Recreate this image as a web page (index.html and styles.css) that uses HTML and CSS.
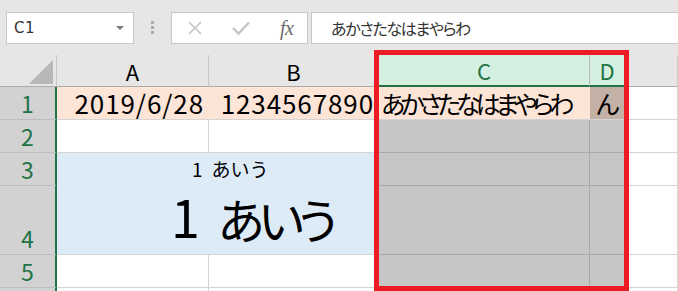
FILE: index.html
```html
<!DOCTYPE html>
<html lang="ja">
<head>
<meta charset="utf-8">
<link rel="stylesheet" href="styles.css">
</head>
<body>
<div class="app">
  <div class="toolbar">
    <div class="namebox"><span class="nb-text">C1</span><span class="nb-arrow"></span></div>
    <div class="grip"><i></i><i></i><i></i></div>
    <div class="fxbuttons">
      <svg class="ic-x" width="16" height="16" viewBox="0 0 16 16"><path d="M2 2 L14 14 M14 2 L2 14" stroke="#c4c4c4" stroke-width="1.6" fill="none"/></svg>
      <svg class="ic-check" width="20" height="16" viewBox="0 0 20 16"><path d="M2 8 L7.5 13.5 L18 2.5" stroke="#c4c4c4" stroke-width="2.4" fill="none"/></svg>
      <span class="ic-fx">fx</span>
    </div>
    <div class="formula"><span class="formula-text">あかさたなはまやらわ</span></div>
  </div>
  <div class="sheet">
    <div class="corner"><svg width="26" height="26" viewBox="0 0 26 26"><polygon points="1,25 25,25 25,1" fill="#b7b7b7"/></svg></div>
    <div class="colh">A</div>
    <div class="colh">B</div>
    <div class="colh sel">C</div>
    <div class="colh sel last">D</div>
    <div class="colh"></div>

    <div class="rowh">1</div>
    <div class="cell peach right num">2019/6/28</div>
    <div class="cell peach right num">1234567890</div>
    <div class="cell peach kana">あかさたなはまやらわ</div>
    <div class="cell peachsel kana">ん</div>
    <div class="cell"></div>

    <div class="rowh">2</div>
    <div class="cell"></div>
    <div class="cell"></div>
    <div class="cell gray"></div>
    <div class="cell gray"></div>
    <div class="cell"></div>

    <div class="rowh">3</div>
    <div class="merged">
      <div class="m-small"><span>1</span><span class="m-small-kana">あいう</span></div>
      <div class="m-big"><span>1</span><span class="m-big-kana">あいう</span></div>
    </div>
    <div class="cell gray"></div>
    <div class="cell gray"></div>
    <div class="cell"></div>

    <div class="rowh">4</div>
    <div class="cell gray"></div>
    <div class="cell gray"></div>
    <div class="cell"></div>

    <div class="rowh">5</div>
    <div class="cell"></div>
    <div class="cell"></div>
    <div class="cell gray"></div>
    <div class="cell gray"></div>
    <div class="cell"></div>

    <div class="rowh"></div>
    <div class="cell"></div>
    <div class="cell"></div>
    <div class="cell gray"></div>
    <div class="cell gray"></div>
    <div class="cell"></div>

    <div class="redbox"></div>
  </div>
</div>
</body>
</html>
```
FILE: styles.css
```css
html, body {
  margin: 0;
  padding: 0;
}
body {
  width: 678px;
  height: 291px;
  overflow: hidden;
  background: #e6e6e6;
  font-family: "Noto Sans CJK JP", "Noto Sans", sans-serif;
}
.app {
  width: 678px;
  height: 291px;
  overflow: hidden;
}
.toolbar {
  display: flex;
  align-items: flex-start;
  height: 55px;
  padding: 12px 0 0 6px;
  box-sizing: border-box;
}
.namebox {
  width: 128px;
  height: 32px;
  box-sizing: border-box;
  background: #fff;
  border: 1px solid #c6c6c6;
  display: flex;
  align-items: center;
  justify-content: space-between;
  padding: 0 9px 0 7px;
}
.nb-text {
  font-family: "DejaVu Sans", sans-serif;
  font-size: 15px;
  color: #333;
  letter-spacing: 0.5px;
}
.nb-arrow {
  width: 0;
  height: 0;
  border-left: 4px solid transparent;
  border-right: 4px solid transparent;
  border-top: 4px solid #7b7b7b;
}
.grip {
  margin-left: 17px;
  margin-top: 9px;
  display: flex;
  flex-direction: column;
  gap: 2px;
}
.grip i {
  display: block;
  width: 3px;
  height: 3px;
  background: #adadad;
}
.fxbuttons {
  margin-left: 17px;
  width: 137px;
  height: 32px;
  box-sizing: border-box;
  background: #fff;
  border: 1px solid #c6c6c6;
  display: flex;
  align-items: center;
  padding-left: 15px;
}
.ic-check {
  margin-left: 28px;
}
.ic-fx {
  margin-left: 29px;
  font-family: "Liberation Serif", serif;
  font-style: italic;
  font-size: 20px;
  color: #6a6a6a;
  letter-spacing: -0.5px;
}
.formula {
  margin-left: 3px;
  flex: 1;
  height: 32px;
  box-sizing: border-box;
  background: #fff;
  border: 1px solid #c6c6c6;
  border-right: none;
  display: flex;
  align-items: center;
  padding-left: 19px;
}
.formula-text {
  font-size: 16px;
  color: #333;
  font-feature-settings: "palt";
  letter-spacing: -1.3px;
}
.sheet {
  position: relative;
  display: grid;
  grid-template-columns: 57px 152px 170px 211px 35px 1fr;
  grid-template-rows: 32px 33px 33px 33px 69px 33px 33px;
}
.corner {
  background: #e6e6e6;
  border-right: 1px solid #c9c9c9;
  border-bottom: 1px solid #ababab;
  box-sizing: border-box;
  display: flex;
  justify-content: flex-end;
  align-items: flex-end;
  padding: 0 2px 1px 0;
}
.corner svg {
  display: block;
}
.colh {
  background: #e6e6e6;
  border-right: 1px solid #c9c9c9;
  border-bottom: 1px solid #ababab;
  box-sizing: border-box;
  display: flex;
  align-items: center;
  justify-content: center;
  font-size: 22px;
  color: #000;
  line-height: 1;
}
.colh.sel {
  background: #d3f0e0;
  color: #217346;
  border-bottom: 2px solid #217346;
  border-right-color: #bcbcbc;
}
.rowh {
  background: #d2d2d2;
  border-right: 2px solid #217346;
  border-bottom: 1px solid #bdbdbd;
  box-sizing: border-box;
  display: flex;
  align-items: flex-end;
  justify-content: center;
  font-size: 23px;
  line-height: 1;
  padding-bottom: 4px;
  color: #217346;
}
.cell {
  background: #fff;
  border-right: 1px solid #d4d4d4;
  border-bottom: 1px solid #d4d4d4;
  box-sizing: border-box;
  display: flex;
  align-items: flex-end;
  font-size: 25px;
  line-height: 1;
  padding-bottom: 3px;
  color: #000;
  white-space: nowrap;
}
.cell.right {
  justify-content: flex-end;
  padding-right: 4px;
}
.cell.num {
  font-size: 26px;
  letter-spacing: 0.9px;
  padding-right: 4px;
}
.cell.peach {
  background: #fce4d6;
  border-right-color: #fce4d6;
}
.cell.peachsel {
  background: #c4b1a6;
  border-right-color: #c4b1a6;
}
.cell.kana {
  font-size: 25px;
  padding-left: 2px;
  font-feature-settings: "palt";
  letter-spacing: -4.9px;
}
.cell.peachsel.kana {
  padding-left: 6px;
}
.cell.gray {
  background: #c6c6c6;
  border-right-color: #a9a9a9;
  border-bottom-color: #a9a9a9;
}
.merged {
  grid-column: 2 / 4;
  grid-row: 4 / 6;
  background: #ddebf7;
  border-bottom: 1px solid #d4d4d4;
  box-sizing: border-box;
  display: flex;
  flex-direction: column;
  color: #000;
  white-space: nowrap;
  overflow: hidden;
}
.m-small {
  height: 33px;
  box-sizing: border-box;
  display: flex;
  align-items: flex-end;
  padding-left: 135px;
  padding-bottom: 8px;
  font-size: 19px;
  line-height: 1;
}
.m-small-kana {
  margin-left: 9px;
}
.m-big {
  height: 68px;
  box-sizing: border-box;
  display: flex;
  align-items: flex-end;
  padding-left: 114px;
  padding-bottom: 12px;
  font-size: 52px;
  line-height: 1;
}
.m-big-kana {
  margin-left: 18px;
  font-size: 48px;
  font-feature-settings: "palt";
  letter-spacing: -6px;
}
.redbox {
  position: absolute;
  left: 374px;
  top: -5px;
  width: 255px;
  height: 241px;
  box-sizing: border-box;
  border: 5px solid #ed1c24;
  pointer-events: none;
}
```
